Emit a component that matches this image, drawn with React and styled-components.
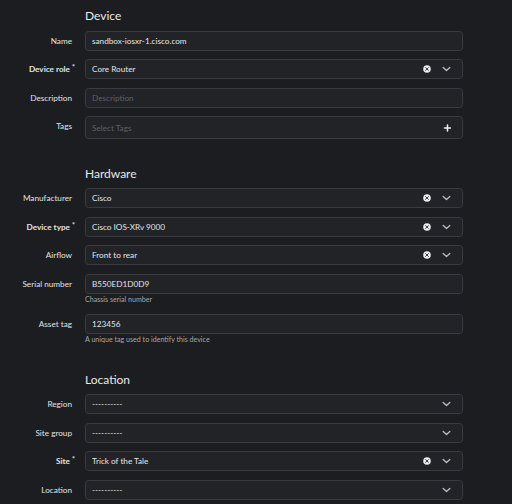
import React from 'react';
import styled, { createGlobalStyle } from 'styled-components';

const GlobalStyle = createGlobalStyle`
  html, body {
    margin: 0;
    padding: 0;
    background: #1b1d20;
  }
  body {
    font-family: Lato, "Noto Sans", "Liberation Sans", sans-serif;
    color: #e4e5e7;
  }
`;

const Page = styled.div`
  min-height: 504px;
  padding-top: 9px;
  box-sizing: border-box;
  background: #1b1d20;
  overflow: hidden;
`;

const Section = styled.section`
  display: flex;
  flex-direction: column;
  margin-bottom: 27.3px;

  &:last-child {
    margin-bottom: 0;
  }
`;

const SectionTitle = styled.h2`
  margin: 0 0 7.6px 85px;
  font-size: 12px;
  line-height: 14px;
  font-weight: 400;
  color: #e8e9eb;
`;

const Rows = styled.div`
  display: flex;
  flex-direction: column;
  gap: 8.57px;
`;

const Row = styled.div`
  display: grid;
  grid-template-columns: 72px 378px;
  column-gap: 13px;
  align-items: start;
`;

const Label = styled.label`
  text-align: right;
  font-size: 8.2px;
  line-height: 20px;
  white-space: nowrap;
  font-weight: ${p => (p.required ? 700 : 400)};
  color: #e2e3e5;
`;

const Star = styled.span`
  display: inline-block;
  width: 0;
  margin-left: 2px;
  font-size: 7px;
  vertical-align: top;
  line-height: 16px;
`;

const Field = styled.div`
  display: flex;
  flex-direction: column;
`;

const Box = styled.div`
  height: ${p => (p.tall ? 23 : 20)}px;
  box-sizing: border-box;
  display: flex;
  align-items: center;
  padding: 0 ${p => (p.tall ? 11 : 11.5)}px 0 6px;
  border: 1px solid #383b40;
  border-radius: 3.5px;
  background: #212327;
  font-size: 8.2px;
`;

const Value = styled.span`
  flex: 1;
  color: ${p => (p.placeholder ? '#5d6168' : '#e4e5e7')};
  white-space: nowrap;
  overflow: hidden;
`;

const Controls = styled.div`
  display: flex;
  align-items: center;
  gap: 11px;
`;

const Help = styled.div`
  margin-top: 1px;
  font-size: 7.1px;
  line-height: 10.4px;
  color: #a5a7aa;
`;

const ClearIcon = () => (
  <svg width="8" height="8" viewBox="0 0 8 8">
    <circle cx="4" cy="4" r="3.8" fill="#ececec" />
    <path d="M2.6 2.6 L5.4 5.4 M5.4 2.6 L2.6 5.4" stroke="#26282c" strokeWidth="0.9" strokeLinecap="round" />
  </svg>
);

const Chevron = () => (
  <svg width="9" height="6" viewBox="0 0 9 6">
    <polyline points="1.2,1.4 4.5,4.6 7.8,1.4" fill="none" stroke="#b4b7bc" strokeWidth="1.4" strokeLinecap="round" strokeLinejoin="round" />
  </svg>
);

const Plus = () => (
  <svg width="9" height="8" viewBox="0 0 9 8">
    <path d="M5.5 1 V7 M2.5 4 H8.5" stroke="#f2f2f2" strokeWidth="1.5" strokeLinecap="round" />
  </svg>
);

function FormRow({ label, required, value, placeholder, clear, select, tags, help }) {
  return (
    <Row>
      <Label required={required}>
        {label}
        {required && <Star>*</Star>}
      </Label>
      <Field>
        <Box tall={tags}>
          <Value placeholder={!value}>{value || placeholder}</Value>
          {(select || tags) && (
            <Controls>
              {clear && <ClearIcon />}
              {select && <Chevron />}
              {tags && <Plus />}
            </Controls>
          )}
        </Box>
        {help && <Help>{help}</Help>}
      </Field>
    </Row>
  );
}

const sections = [
  {
    title: 'Device',
    rows: [
      { label: 'Name', value: 'sandbox-iosxr-1.cisco.com' },
      { label: 'Device role', required: true, value: 'Core Router', select: true, clear: true },
      { label: 'Description', placeholder: 'Description' },
      { label: 'Tags', placeholder: 'Select Tags', tags: true },
    ],
  },
  {
    title: 'Hardware',
    rows: [
      { label: 'Manufacturer', value: 'Cisco', select: true, clear: true },
      { label: 'Device type', required: true, value: 'Cisco IOS-XRv 9000', select: true, clear: true },
      { label: 'Airflow', value: 'Front to rear', select: true, clear: true },
      { label: 'Serial number', value: 'B550ED1D0D9', help: 'Chassis serial number' },
      { label: 'Asset tag', value: '123456', help: 'A unique tag used to identify this device' },
    ],
  },
  {
    title: 'Location',
    rows: [
      { label: 'Region', value: '----------', select: true },
      { label: 'Site group', value: '----------', select: true },
      { label: 'Site', required: true, value: 'Trick of the Tale', select: true, clear: true },
      { label: 'Location', value: '----------', select: true },
    ],
  },
];

export default function App() {
  return (
    <>
      <GlobalStyle />
      <Page>
        {sections.map(section => (
          <Section key={section.title}>
            <SectionTitle>{section.title}</SectionTitle>
            <Rows>
              {section.rows.map(row => (
                <FormRow key={row.label} {...row} />
              ))}
            </Rows>
          </Section>
        ))}
      </Page>
    </>
  );
}
